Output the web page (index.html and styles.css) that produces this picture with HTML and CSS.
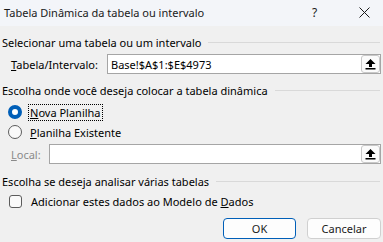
FILE: index.html
```html
<!DOCTYPE html>
<html lang="pt">
<head>
<meta charset="utf-8">
<link rel="stylesheet" href="styles.css">
</head>
<body>
<div class="dialog">
  <div class="titlebar">
    <span class="title">Tabela Dinâmica da tabela ou intervalo</span>
    <span class="help">?</span>
    <span class="close">
      <svg width="11" height="11" viewBox="0 0 11 11"><path d="M0.5 0.5 L10.5 10.5 M10.5 0.5 L0.5 10.5" stroke="#1a1a1a" stroke-width="1" fill="none"/></svg>
    </span>
  </div>
  <div class="content">
    <div class="group-head g1"><span>Selecionar uma tabela ou um intervalo</span><span class="rule"></span></div>
    <div class="field-row r1">
      <label class="field-label"><u>T</u>abela/Intervalo:</label>
      <div class="input">
        <span class="value">Base!$A$1:$E$4973</span>
        <span class="pick">
          <svg width="11" height="12" viewBox="0 0 11 12"><path d="M5.5 1 L10.5 6 L7 6 L7 9 L4 9 L4 6 L0.5 6 Z" fill="#000"/><rect x="0.5" y="10" width="10" height="1.5" fill="#000"/></svg>
        </span>
      </div>
    </div>
    <div class="group-head g2"><span>Escolha onde você deseja colocar a tabela dinâmica</span><span class="rule"></span></div>
    <div class="option r-opt1">
      <span class="radio on"></span>
      <span class="opt-label focus"><u>N</u>ova Planilha</span>
    </div>
    <div class="option r-opt2">
      <span class="radio"></span>
      <span class="opt-label"><u>P</u>lanilha Existente</span>
    </div>
    <div class="field-row r2">
      <label class="field-label dim"><u>L</u>ocal:</label>
      <div class="input local">
        <span class="value"></span>
        <span class="pick">
          <svg width="11" height="12" viewBox="0 0 11 12"><path d="M5.5 1 L10.5 6 L7 6 L7 9 L4 9 L4 6 L0.5 6 Z" fill="#000"/><rect x="0.5" y="10" width="10" height="1.5" fill="#000"/></svg>
        </span>
      </div>
    </div>
    <div class="group-head g3"><span>Escolha se deseja analisar várias tabelas</span><span class="rule"></span></div>
    <div class="option r-chk">
      <span class="check"></span>
      <span class="opt-label">Adicionar estes dados ao Modelo de <u>D</u>ados</span>
    </div>
    <div class="buttons">
      <button class="btn default">OK</button>
      <button class="btn">Cancelar</button>
    </div>
  </div>
</div>
</body>
</html>
```
FILE: styles.css
```css
html, body {
  margin: 0;
  padding: 0;
}
body {
  width: 383px;
  height: 242px;
  overflow: hidden;
  background: #f0f0f0;
  font-family: "Noto Sans", "Segoe UI", sans-serif;
  font-size: 11px;
  color: #000;
}
.dialog {
  display: flex;
  flex-direction: column;
}
.titlebar {
  height: 26px;
  background: #f3f5f9;
  display: flex;
  align-items: center;
  padding-left: 4px;
  box-sizing: border-box;
}
.title {
  flex: 1;
  font-size: 11px;
  color: #1a1a1a;
  margin-top: -2px;
}
.help {
  width: 12px;
  margin-right: 35px;
  font-size: 12px;
  color: #1a1a1a;
  margin-top: -2px;
}
.close {
  display: flex;
  margin-right: 13px;
  margin-top: -2px;
}
.content {
  padding: 0 2px 0 2px;
  display: flex;
  flex-direction: column;
}
.group-head {
  height: 18px;
  display: flex;
  align-items: center;
  white-space: nowrap;
}
.group-head .rule {
  flex: 1;
  height: 0;
  border-top: 1px solid #d9d9d9;
  margin-left: 7px;
  margin-right: 1px;
}
.g1 { margin-top: 7px; }
.g2 { margin-top: 7px; }
.g3 { margin-top: 8px; }
.field-row {
  display: flex;
  align-items: center;
  height: 20px;
  margin-top: 3px;
}
.field-label {
  padding-left: 9px;
}
.r1 .field-label { width: 96px; }
.r2 .field-label { width: 38px; }
.field-label.dim { color: #8a8a8a; }
.input {
  flex: 1;
  height: 20px;
  box-sizing: border-box;
  border: 1px solid #a5a5a5;
  background: #fff;
  display: flex;
  align-items: center;
}
.input .value {
  flex: 1;
  padding-left: 3px;
}
.pick {
  width: 19px;
  height: 18px;
  box-sizing: border-box;
  border: 1px solid #c8c8c8;
  border-radius: 3px;
  background: #fbfbfb;
  display: flex;
  align-items: center;
  justify-content: center;
  margin-right: 0;
}
.option {
  height: 18px;
  display: flex;
  align-items: center;
  padding-left: 6px;
}
.r-opt1 { margin-top: 4px; }
.r-opt2 { margin-top: 2px; }
.r-chk { margin-top: 2px; padding-left: 7px; }
.radio {
  width: 14px;
  height: 14px;
  box-sizing: border-box;
  border-radius: 50%;
  border: 1px solid #5c5c5c;
  background: #fafafa;
  margin-right: 6px;
  flex: none;
}
.radio.on {
  border: 4px solid #005fb8;
  background: #fff;
}
.opt-label {
  padding: 0 1px;
  border: 1px dotted transparent;
}
.opt-label.focus {
  border: 1px dotted #000;
}
.check {
  width: 13px;
  height: 13px;
  box-sizing: border-box;
  border: 1px solid #5c5c5c;
  border-radius: 3px;
  background: #fafafa;
  margin-right: 7px;
  flex: none;
}
.buttons {
  display: flex;
  justify-content: flex-end;
  gap: 11px;
  margin-top: 8px;
}
.btn {
  height: 21px;
  box-sizing: border-box;
  border: 1px solid #d0d0d0;
  border-radius: 4px;
  background: #fdfdfd;
  font-family: inherit;
  font-size: 11px;
  color: #1a1a1a;
  padding: 0;
  width: 74px;
}
.btn.default {
  border-color: #005fb8;
  width: 73px;
}
```
